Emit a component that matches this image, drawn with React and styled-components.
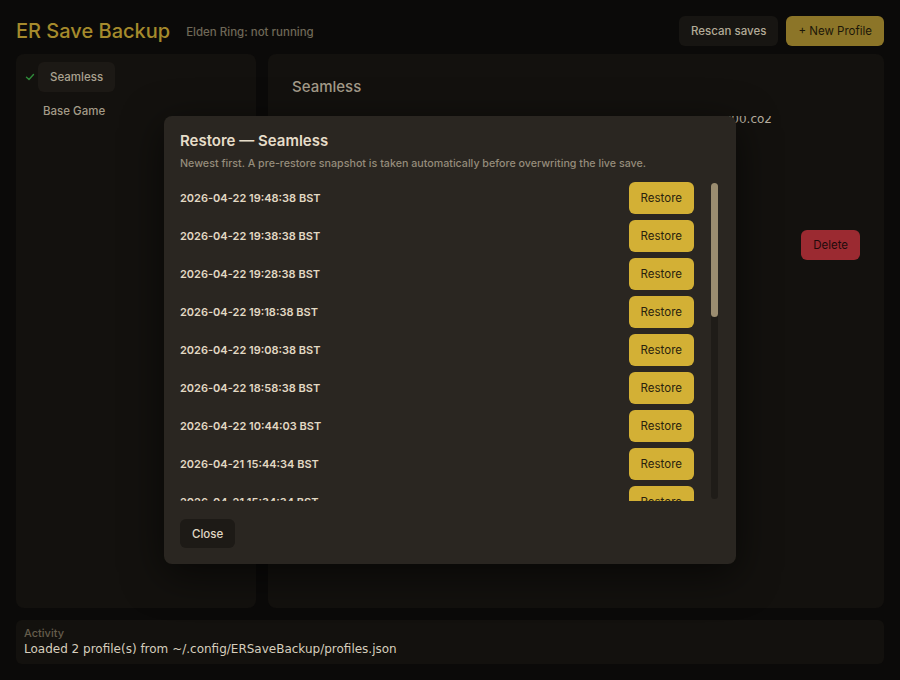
import React from "react";
import styled, { createGlobalStyle } from "styled-components";

const Global = createGlobalStyle`
  html, body { margin: 0; padding: 0; background: #0b0a09; }
  body { font-family: Inter, "Noto Sans", sans-serif; color: #d8d0c0; }
  * { box-sizing: border-box; }
`;

const Page = styled.div`
  position: relative;
  width: 900px;
  height: 680px;
  padding: 16px;
  display: flex;
  flex-direction: column;
  overflow: hidden;
`;

const Header = styled.header`
  display: flex;
  align-items: center;
  height: 30px;
  gap: 16px;
  margin-bottom: 8px;
`;

const Title = styled.h1`
  margin: 0;
  font-size: 20px;
  font-weight: 500;
  color: #a58a2c;
`;

const Status = styled.span`
  font-size: 11.5px;
  font-weight: 500;
  color: #6f6857;
  padding-top: 2px;
`;

const Spacer = styled.div`
  flex: 1;
`;

const Btn = styled.button`
  font-family: Inter, sans-serif;
  font-size: 11.5px;
  border: none;
  border-radius: 6px;
  height: ${(p) => p.$h || 30}px;
  padding: 0 ${(p) => p.$px || 12}px;
  cursor: pointer;
  font-weight: ${(p) => p.$weight || 400};
  background: ${(p) =>
    p.$variant === "gold"
      ? "#8c7528"
      : p.$variant === "restore"
      ? "#d3b035"
      : p.$variant === "danger"
      ? "#9b2a31"
      : p.$variant === "close"
      ? "#1d1a16"
      : "#171512"};
  color: ${(p) =>
    p.$variant === "gold"
      ? "#1c1709"
      : p.$variant === "restore"
      ? "#2a220e"
      : p.$variant === "danger"
      ? "#1e0a0b"
      : p.$variant === "close"
      ? "#e0d8c6"
      : "#b3ab98"};
`;

const HeaderActions = styled.div`
  display: flex;
  gap: 8px;
`;

const Main = styled.div`
  flex: 1;
  display: grid;
  grid-template-columns: 240px 1fr;
  gap: 12px;
  min-height: 0;
  margin-bottom: 12px;
`;

const Panel = styled.section`
  background: #13110e;
  border-radius: 8px;
  padding: ${(p) => p.$pad || "8px"};
  display: flex;
  flex-direction: column;
`;

const ProfileRow = styled.div`
  display: flex;
  align-items: center;
  height: 30px;
  margin-bottom: 4px;
`;

const Check = styled.span`
  width: 14px;
  display: flex;
  justify-content: flex-start;
  padding-left: 1px;
`;

const ProfileName = styled.span`
  font-size: 11.5px;
  font-weight: 500;
  color: ${(p) => (p.$active ? "#aaa290" : "#a39b88")};
  background: ${(p) => (p.$active ? "#1c1915" : "transparent")};
  border-radius: 6px;
  padding: 0 ${(p) => (p.$active ? "12px" : "5px")};
  height: 30px;
  display: flex;
  align-items: center;
`;

const DetailTitle = styled.h2`
  margin: 0;
  font-size: 15px;
  line-height: 18px;
  font-weight: 500;
  color: #a39b89;
`;

const PathClip = styled.div`
  height: 10px;
  overflow: hidden;
  display: flex;
  align-items: flex-end;
  justify-content: flex-end;
  margin-top: 20px;
  padding-right: 88px;
`;

const PathText = styled.span`
  font-family: "DejaVu Sans", sans-serif;
  font-size: 12px;
  line-height: 14px;
  color: #b8b0a0;
  white-space: nowrap;
`;

const DeleteRow = styled.div`
  display: flex;
  justify-content: flex-end;
  margin-top: 104px;
`;

const Activity = styled.footer`
  background: #13110e;
  border-radius: 6px;
  height: 44px;
  padding: 7px 8px;
  display: flex;
  flex-direction: column;
`;

const ActivityLabel = styled.span`
  font-size: 11px;
  font-weight: 500;
  color: #655d4c;
  line-height: 13px;
`;

const ActivityText = styled.span`
  font-family: "DejaVu Sans", sans-serif;
  font-size: 12px;
  color: #d6cebd;
  line-height: 16px;
  margin-top: 1px;
`;

const Modal = styled.div`
  position: absolute;
  left: 164px;
  top: 116px;
  width: 572px;
  height: 448px;
  background: #2a2621;
  border-radius: 8px;
  padding: 16px 18px 16px 16px;
  display: flex;
  flex-direction: column;
  box-shadow: 0 10px 40px rgba(0, 0, 0, 0.6);
`;

const ModalTitle = styled.h3`
  margin: 0;
  font-size: 15px;
  font-weight: 600;
  color: #e6ddc9;
  line-height: 18px;
`;

const ModalSub = styled.p`
  margin: 7px 0 0;
  font-size: 10.7px;
  font-weight: 500;
  color: #958c7b;
  line-height: 14px;
`;

const ListWrap = styled.div`
  margin-top: 8px;
  height: 322px;
  display: flex;
  gap: 0;
`;

const List = styled.div`
  flex: 1;
  overflow: hidden;
`;

const ScrollTrack = styled.div`
  width: 7px;
  margin: 4px 0 2px;
  background: #1f1c18;
  border-radius: 4px;
  display: flex;
  flex-direction: column;
`;

const ScrollThumb = styled.div`
  height: 134px;
  background: #9b8d70;
  border-radius: 4px;
`;

const Row = styled.div`
  display: flex;
  align-items: center;
  justify-content: space-between;
  height: 38px;
  padding-right: 17px;
`;

const Stamp = styled.span`
  font-size: 11px;
  font-weight: 600;
  color: #e2d9c4;
`;

const ModalFooter = styled.div`
  margin-top: auto;
  display: flex;
`;

const CheckIcon = () => (
  <svg width="10" height="10" viewBox="0 0 10 10">
    <path d="M1.5 5.2 L4 7.5 L8.5 2.5" fill="none" stroke="#2f8a3a" strokeWidth="1.4" strokeLinecap="round" strokeLinejoin="round" />
  </svg>
);

const stamps = [
  "2026-04-22 19:48:38 BST",
  "2026-04-22 19:38:38 BST",
  "2026-04-22 19:28:38 BST",
  "2026-04-22 19:18:38 BST",
  "2026-04-22 19:08:38 BST",
  "2026-04-22 18:58:38 BST",
  "2026-04-22 10:44:03 BST",
  "2026-04-21 15:44:34 BST",
  "2026-04-21 15:34:34 BST",
  "2026-04-21 15:24:34 BST",
  "2026-04-21 15:14:34 BST",
  "2026-04-21 15:04:34 BST",
];

export default function App() {
  return (
    <>
      <Global />
      <Page>
        <Header>
          <Title>ER Save Backup</Title>
          <Status>Elden Ring: not running</Status>
          <Spacer />
          <HeaderActions>
            <Btn $weight={500}>Rescan saves</Btn>
            <Btn $variant="gold">+ New Profile</Btn>
          </HeaderActions>
        </Header>
        <Main>
          <Panel>
            <ProfileRow>
              <Check>
                <CheckIcon />
              </Check>
              <ProfileName $active>Seamless</ProfileName>
            </ProfileRow>
            <ProfileRow>
              <Check />
              <ProfileName>Base Game</ProfileName>
            </ProfileRow>
          </Panel>
          <Panel $pad="24px 24px">
            <DetailTitle>Seamless</DetailTitle>
            <PathClip>
              <PathText>~/.steam/EldenRing/ER0000.co2</PathText>
            </PathClip>
            <DeleteRow>
              <Btn $variant="danger">Delete</Btn>
            </DeleteRow>
          </Panel>
        </Main>
        <Activity>
          <ActivityLabel>Activity</ActivityLabel>
          <ActivityText>Loaded 2 profile(s) from ~/.config/ERSaveBackup/profiles.json</ActivityText>
        </Activity>
        <Modal>
          <ModalTitle>Restore — Seamless</ModalTitle>
          <ModalSub>
            Newest first. A pre-restore snapshot is taken automatically before overwriting the live save.
          </ModalSub>
          <ListWrap>
            <List>
              {stamps.map((s) => (
                <Row key={s}>
                  <Stamp>{s}</Stamp>
                  <Btn $variant="restore" $h={32}>
                    Restore
                  </Btn>
                </Row>
              ))}
            </List>
            <ScrollTrack>
              <ScrollThumb />
            </ScrollTrack>
          </ListWrap>
          <ModalFooter>
            <Btn $variant="close" $weight={500} $h={29}>
              Close
            </Btn>
          </ModalFooter>
        </Modal>
      </Page>
    </>
  );
}
